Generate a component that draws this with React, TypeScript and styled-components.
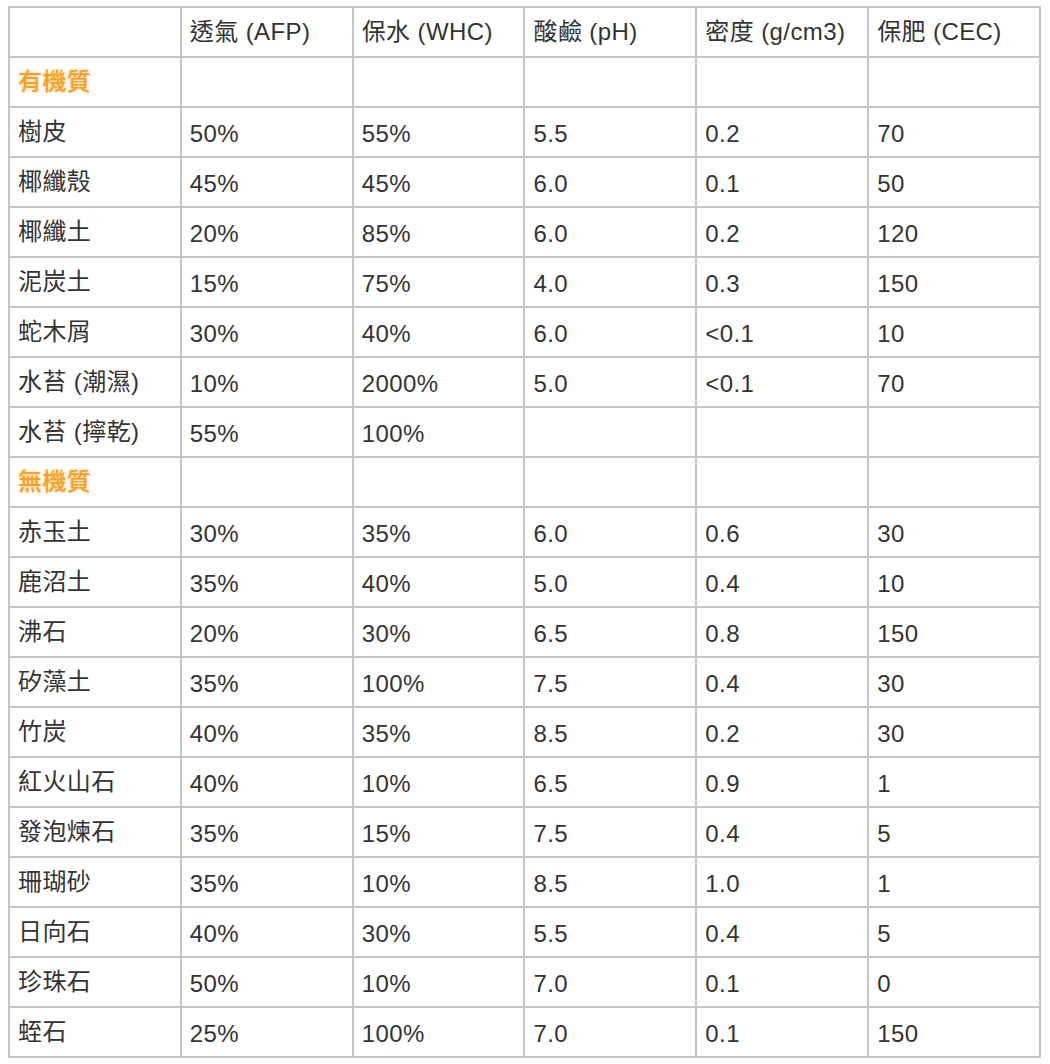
import React from 'react';
import styled, { createGlobalStyle } from 'styled-components';

const GlobalStyle = createGlobalStyle`
  body {
    margin: 0;
    background: #ffffff;
    font-family: 'Liberation Sans', 'Noto Sans CJK TC', sans-serif;
    color: #333333;
  }
`;

const Page = styled.div`
  padding: 6px 8px;
`;

const Table = styled.table`
  border-collapse: collapse;
  table-layout: fixed;
  width: 1033px;
  font-size: 24px;
  letter-spacing: 0.4px;
`;

// CJK glyphs in the reference sit a little higher than the digits:
// label cells get bottom padding, number cells a bit of top padding.
// Height is trimmed to match so every row stays 50px.
const Cell = styled.td<{ $lift?: boolean }>`
  height: ${(p) => (p.$lift ? '43px' : '45px')};
  padding: ${(p) => (p.$lift ? '0 8px 5px' : '3px 8px 0')};
  border: 2px solid #c6c6c6;
  vertical-align: middle;
  white-space: nowrap;
  overflow: hidden;
`;

const Group = styled.span`
  color: #f4a126;
  font-weight: 500;
  text-shadow: 0 0 3px rgba(255, 176, 70, 0.75);
`;

type Row = { name: string; values: string[]; group?: boolean };

const headers = ['', '透氣 (AFP)', '保水 (WHC)', '酸鹼 (pH)', '密度 (g/cm3)', '保肥 (CEC)'];

const rows: Row[] = [
  { name: '有機質', values: [], group: true },
  { name: '樹皮', values: ['50%', '55%', '5.5', '0.2', '70'] },
  { name: '椰纖殼', values: ['45%', '45%', '6.0', '0.1', '50'] },
  { name: '椰纖土', values: ['20%', '85%', '6.0', '0.2', '120'] },
  { name: '泥炭土', values: ['15%', '75%', '4.0', '0.3', '150'] },
  { name: '蛇木屑', values: ['30%', '40%', '6.0', '<0.1', '10'] },
  { name: '水苔 (潮濕)', values: ['10%', '2000%', '5.0', '<0.1', '70'] },
  { name: '水苔 (擰乾)', values: ['55%', '100%'] },
  { name: '無機質', values: [], group: true },
  { name: '赤玉土', values: ['30%', '35%', '6.0', '0.6', '30'] },
  { name: '鹿沼土', values: ['35%', '40%', '5.0', '0.4', '10'] },
  { name: '沸石', values: ['20%', '30%', '6.5', '0.8', '150'] },
  { name: '矽藻土', values: ['35%', '100%', '7.5', '0.4', '30'] },
  { name: '竹炭', values: ['40%', '35%', '8.5', '0.2', '30'] },
  { name: '紅火山石', values: ['40%', '10%', '6.5', '0.9', '1'] },
  { name: '發泡煉石', values: ['35%', '15%', '7.5', '0.4', '5'] },
  { name: '珊瑚砂', values: ['35%', '10%', '8.5', '1.0', '1'] },
  { name: '日向石', values: ['40%', '30%', '5.5', '0.4', '5'] },
  { name: '珍珠石', values: ['50%', '10%', '7.0', '0.1', '0'] },
  { name: '蛭石', values: ['25%', '100%', '7.0', '0.1', '150'] },
];

export default function App() {
  return (
    <Page>
      <GlobalStyle />
      <Table>
        <tbody>
          <tr>
            {headers.map((h, i) => (
              <Cell key={i} $lift>
                {h}
              </Cell>
            ))}
          </tr>
          {rows.map((r) => (
            <tr key={r.name}>
              <Cell $lift>{r.group ? <Group>{r.name}</Group> : r.name}</Cell>
              {[0, 1, 2, 3, 4].map((i) => (
                <Cell key={i}>{r.values[i] ?? ''}</Cell>
              ))}
            </tr>
          ))}
        </tbody>
      </Table>
    </Page>
  );
}
